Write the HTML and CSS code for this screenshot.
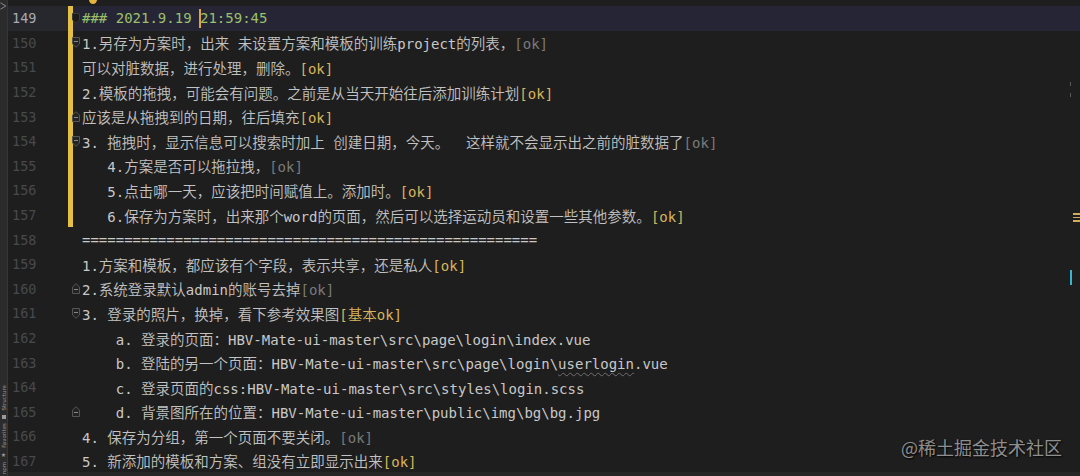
FILE: index.html
```html
<!DOCTYPE html>
<html>
<head>
<meta charset="utf-8">
<link rel="stylesheet" href="styles.css">
</head>
<body>
<div class="strip">
  <svg class="arr" width="7" height="8" viewBox="0 0 7 8"><path d="M0.5 0.8 L5.8 4 L0.5 7.2" fill="none" stroke="#8a8a8a" stroke-width="1"/></svg>
  <div class="tabs"><span class="tab">Structure</span><span class="sqr"></span><span class="tab">Favorites</span><span class="star">★</span><span class="tab">npm</span></div>
</div>
<div class="main">
  <div class="editor">
    <div class="row cur"><span class="num">149</span><span class="chg on"></span><span class="fold"><svg width="8" height="11" viewBox="0 0 8 11"><path d="M0.5 0.5 H7.5 V7 L4 10.3 L0.5 7 Z" fill="#1b1b1b" stroke="#3a3a3a"/></svg></span><span class="txt h">### 2021.9.19 <span class="caret"></span>21:59:45</span></div>
    <div class="row"><span class="num">150</span><span class="chg on"></span><span class="fold"><svg width="8" height="11" viewBox="0 0 8 11"><path d="M0.5 0.5 H7.5 V7 L4 10.3 L0.5 7 Z" fill="#232323" stroke="#555"/><path d="M2 4.5 H6" stroke="#888"/></svg></span><span class="txt">1.<span class="z">另存为方案时，出来</span> <span class="z">未设置方案和模板的训练</span>project<span class="z">的列表，</span><span class="gr">[ok]</span></span></div>
    <div class="row"><span class="num">151</span><span class="chg on"></span><span class="fold"></span><span class="txt"><span class="z">可以对脏数据，进行处理，删除。</span><span class="ok">[ok]</span></span></div>
    <div class="row"><span class="num">152</span><span class="chg on"></span><span class="fold"></span><span class="txt">2.<span class="z">模板的拖拽，可能会有问题。之前是从当天开始往后添加训练计划</span><span class="ok">[ok]</span></span></div>
    <div class="row"><span class="num">153</span><span class="chg on"></span><span class="fold"><svg width="8" height="11" viewBox="0 0 8 11"><path d="M0.5 10.5 H7.5 V4 L4 0.7 L0.5 4 Z" fill="#232323" stroke="#555"/><path d="M2 6.5 H6" stroke="#888"/></svg></span><span class="txt"><span class="z">应该是从拖拽到的日期，往后填充</span><span class="ok">[ok]</span></span></div>
    <div class="row"><span class="num">154</span><span class="chg on"></span><span class="fold"><svg width="8" height="11" viewBox="0 0 8 11"><path d="M0.5 0.5 H7.5 V7 L4 10.3 L0.5 7 Z" fill="#232323" stroke="#555"/><path d="M2 4.5 H6" stroke="#888"/></svg></span><span class="txt">3. <span class="z">拖拽时，显示信息可以搜索时加上</span> <span class="z">创建日期，今天。</span>  <span class="z">这样就不会显示出之前的脏数据了</span><span class="gr">[ok]</span></span></div>
    <div class="row"><span class="num">155</span><span class="chg on"></span><span class="fold"></span><span class="txt">   4.<span class="z">方案是否可以拖拉拽，</span><span class="gr">[ok]</span></span></div>
    <div class="row"><span class="num">156</span><span class="chg on"></span><span class="fold"></span><span class="txt">   5.<span class="z">点击哪一天，应该把时间赋值上。添加时。</span><span class="ok">[ok]</span></span></div>
    <div class="row"><span class="num">157</span><span class="chg on"></span><span class="fold"></span><span class="txt">   6.<span class="z">保存为方案时，出来那个</span>word<span class="z">的页面，然后可以选择运动员和设置一些其他参数。</span><span class="ok">[ok]</span></span></div>
    <div class="row"><span class="num">158</span><span class="chg"></span><span class="fold"></span><span class="txt">======================================================</span></div>
    <div class="row"><span class="num">159</span><span class="chg"></span><span class="fold"></span><span class="txt">1.<span class="z">方案和模板，都应该有个字段，表示共享，还是私人</span><span class="ok">[ok]</span></span></div>
    <div class="row"><span class="num">160</span><span class="chg"></span><span class="fold"><svg width="8" height="11" viewBox="0 0 8 11"><path d="M0.5 10.5 H7.5 V4 L4 0.7 L0.5 4 Z" fill="#232323" stroke="#555"/><path d="M2 6.5 H6" stroke="#888"/></svg></span><span class="txt">2.<span class="z">系统登录默认</span>admin<span class="z">的账号去掉</span><span class="gr">[ok]</span></span></div>
    <div class="row"><span class="num">161</span><span class="chg"></span><span class="fold"><svg width="8" height="11" viewBox="0 0 8 11"><path d="M0.5 0.5 H7.5 V7 L4 10.3 L0.5 7 Z" fill="#232323" stroke="#555"/><path d="M2 4.5 H6" stroke="#888"/></svg></span><span class="txt">3. <span class="z">登录的照片，换掉，看下参考效果图</span><span class="ok">[<span class="z">基本</span>ok]</span></span></div>
    <div class="row"><span class="num">162</span><span class="chg"></span><span class="fold"></span><span class="txt">    a. <span class="z">登录的页面：</span>HBV-Mate-ui-master\src\page\login\index.vue</span></div>
    <div class="row"><span class="num">163</span><span class="chg"></span><span class="fold"></span><span class="txt">    b. <span class="z">登陆的另一个页面：</span>HBV-Mate-ui-master\src\page\login\<span class="sq">userlogin</span>.vue</span></div>
    <div class="row"><span class="num">164</span><span class="chg"></span><span class="fold"></span><span class="txt">    c. <span class="z">登录页面的</span>css:HBV-Mate-ui-master\src\styles\login.scss</span></div>
    <div class="row"><span class="num">165</span><span class="chg"></span><span class="fold"><svg width="8" height="11" viewBox="0 0 8 11"><path d="M0.5 10.5 H7.5 V4 L4 0.7 L0.5 4 Z" fill="#232323" stroke="#555"/><path d="M2 6.5 H6" stroke="#888"/></svg></span><span class="txt">    d. <span class="z">背景图所在的位置：</span>HBV-Mate-ui-master\public\img\bg\bg.jpg</span></div>
    <div class="row"><span class="num">166</span><span class="chg"></span><span class="fold"></span><span class="txt">4. <span class="z">保存为分组，第一个页面不要关闭。</span><span class="gr">[ok]</span></span></div>
    <div class="row"><span class="num">167</span><span class="chg"></span><span class="fold"></span><span class="txt">5. <span class="z">新添加的模板和方案、组没有立即显示出来</span><span class="ok">[ok]</span></span></div>
  </div>
  <div class="bottom"></div>
  <div class="bulb"></div>
  <div class="mk tick1"></div>
  <div class="mk tick2"></div>
  <div class="mk cyan"></div>
  <div class="mk menu"><i></i><i></i><i></i></div>
  <div class="wm">@稀土掘金技术社区</div>
</div>
</body>
</html>
```

FILE: styles.css
```css
html, body {
  margin: 0;
  padding: 0;
}
body {
  width: 1080px;
  height: 476px;
  overflow: hidden;
  background: #1e1e1e;
  display: flex;
  font-family: "DejaVu Sans Mono", "Noto Sans CJK SC", monospace;
}
.strip {
  width: 7px;
  flex: none;
  background: #2b2b2b;
  border-right: 1px solid #363636;
  display: flex;
  flex-direction: column;
  justify-content: space-between;
  overflow: hidden;
}
.arr {
  display: block;
  margin-top: 2px;
}
.tabs {
  display: flex;
  flex-direction: column;
  align-items: center;
  gap: 4px;
  padding-bottom: 2px;
}
.tab {
  writing-mode: vertical-rl;
  transform: rotate(180deg);
  font-family: "DejaVu Sans", sans-serif;
  font-size: 5.5px;
  line-height: 6px;
  color: #9a9a9a;
}
.sqr {
  width: 4px;
  height: 4px;
  background: #9a9a9a;
}
.star {
  font-family: "DejaVu Sans", sans-serif;
  font-size: 6px;
  line-height: 6px;
  color: #9a9a9a;
}
.main {
  flex: 1;
  position: relative;
  display: flex;
  flex-direction: column;
  overflow: hidden;
}
.editor {
  flex: 1;
  padding-top: 6px;
  overflow: hidden;
}
.row {
  display: grid;
  grid-template-columns: 60px 5px 9px 1fr;
  height: 24.6px;
  align-items: center;
}
.num {
  align-self: stretch;
  display: flex;
  align-items: center;
  padding-left: 4px;
  font-size: 13.5px;
  color: #47494d;
}
.cur {
  background: #252536;
}
.cur .num {
  background: #26282e;
  color: #a9abb1;
}
.chg {
  align-self: stretch;
}
.chg.on {
  background: #e6bf45;
}
.fold {
  display: flex;
  align-items: center;
  justify-content: flex-start;
  margin-left: -1px;
}
.fold svg {
  display: block;
}
.txt {
  white-space: pre;
  font-size: 14px;
  color: #c8c8c8;
}
.z {
  font-size: 14.5px;
  font-weight: 350;
  color: #c2c2c2;
}
.h {
  color: #9ac06b;
}
.ok {
  color: #d7b55c;
}
.ok .z {
  color: #d7b55c;
}
.gr {
  color: #7a7a7a;
}
.sq {
  text-decoration: underline wavy #6f6f6f;
  text-decoration-thickness: 1px;
  text-underline-offset: 3px;
}
.caret {
  display: inline-block;
  width: 2px;
  height: 19px;
  background: #e0a43a;
  vertical-align: middle;
  margin: 0 -1px;
}
.bottom {
  height: 4px;
  flex: none;
  background: #262626;
}
.bulb {
  position: absolute;
  left: 81px;
  top: -5px;
  width: 8px;
  height: 9px;
  border-radius: 50%;
  background: #e5b43a;
}
.mk {
  position: absolute;
}
.tick1, .tick2 {
  right: 9px;
  width: 1px;
  height: 4px;
  background: #5a5a5a;
}
.tick1 { top: 82px; }
.tick2 { top: 93px; }
.cyan {
  right: 8px;
  top: 270px;
  width: 2px;
  height: 15px;
  background: #39b5cf;
}
.menu {
  right: 0;
  top: 213px;
  width: 7px;
  display: flex;
  flex-direction: column;
  gap: 2px;
}
.menu i {
  display: block;
  height: 1.5px;
  background: #cfae5a;
}
.wm {
  position: absolute;
  right: 18px;
  top: 436px;
  font-family: "Noto Sans CJK SC", sans-serif;
  font-size: 18px;
  line-height: 22px;
  color: #8e8e8e;
  text-shadow: 1px 1px 2px #000;
}
```
